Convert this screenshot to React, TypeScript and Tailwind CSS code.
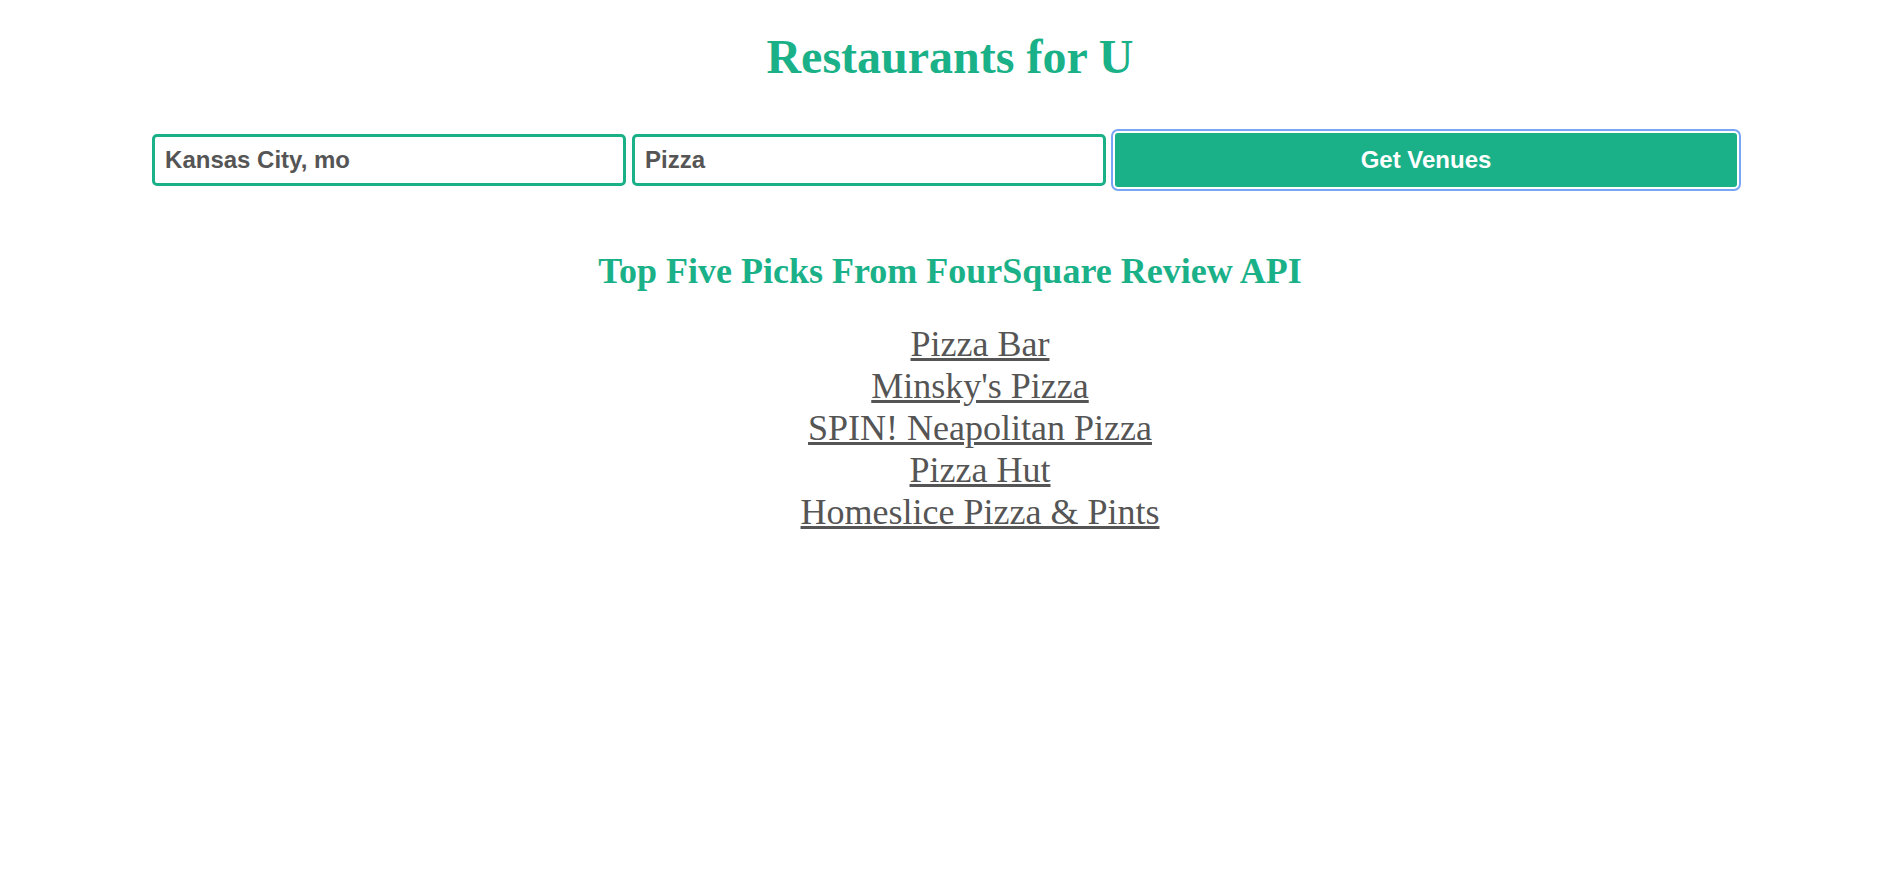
import React from "react";

const picks = [
  "Pizza Bar",
  "Minsky's Pizza",
  "SPIN! Neapolitan Pizza",
  "Pizza Hut",
  "Homeslice Pizza & Pints",
];

export default function App() {
  return (
    <div className="min-h-[892px] w-full bg-white font-['Liberation_Serif',_'Times_New_Roman',_serif]">
      <h1 className="mt-[29px] pl-[12px] text-center text-[48px] font-bold leading-[55px] text-[#1ab188]">
        Restaurants for U
      </h1>

      <div className="mx-auto mt-[49px] flex w-[84%] items-center pl-[1px]">
        <input
          type="text"
          defaultValue="Kansas City, mo"
          className="h-[52px] w-[474px] rounded-[5px] border-[3px] border-[#1ab188] bg-white px-[10px] font-['Liberation_Sans',_Arial,_sans-serif] text-[24px] font-bold text-[#555] outline-none"
        />
        <input
          type="text"
          defaultValue="Pizza"
          className="ml-[6px] h-[52px] w-[474px] rounded-[5px] border-[3px] border-[#1ab188] bg-white px-[10px] font-['Liberation_Sans',_Arial,_sans-serif] text-[24px] font-bold text-[#555] outline-none"
        />
        <button
          type="button"
          className="ml-[9px] h-[54px] flex-1 rounded-[3px] bg-[#1ab188] font-['Liberation_Sans',_Arial,_sans-serif] text-[24px] font-bold text-white outline-2 outline-offset-[2px] outline-[#78a6f6] outline-solid"
        >
          Get Venues
        </button>
      </div>

      <h2 className="mt-[64px] pl-[12px] text-center text-[36px] font-bold leading-[41px] text-[#1ab188]">
        Top Five Picks From FourSquare Review API
      </h2>

      <ul className="mt-[31px] flex flex-col items-center pl-[72px]">
        {picks.map((name) => (
          <li key={name} className="text-[36px] leading-[42px]">
            <a href="#" className="text-[#555] underline">
              {name}
            </a>
          </li>
        ))}
      </ul>
    </div>
  );
}
